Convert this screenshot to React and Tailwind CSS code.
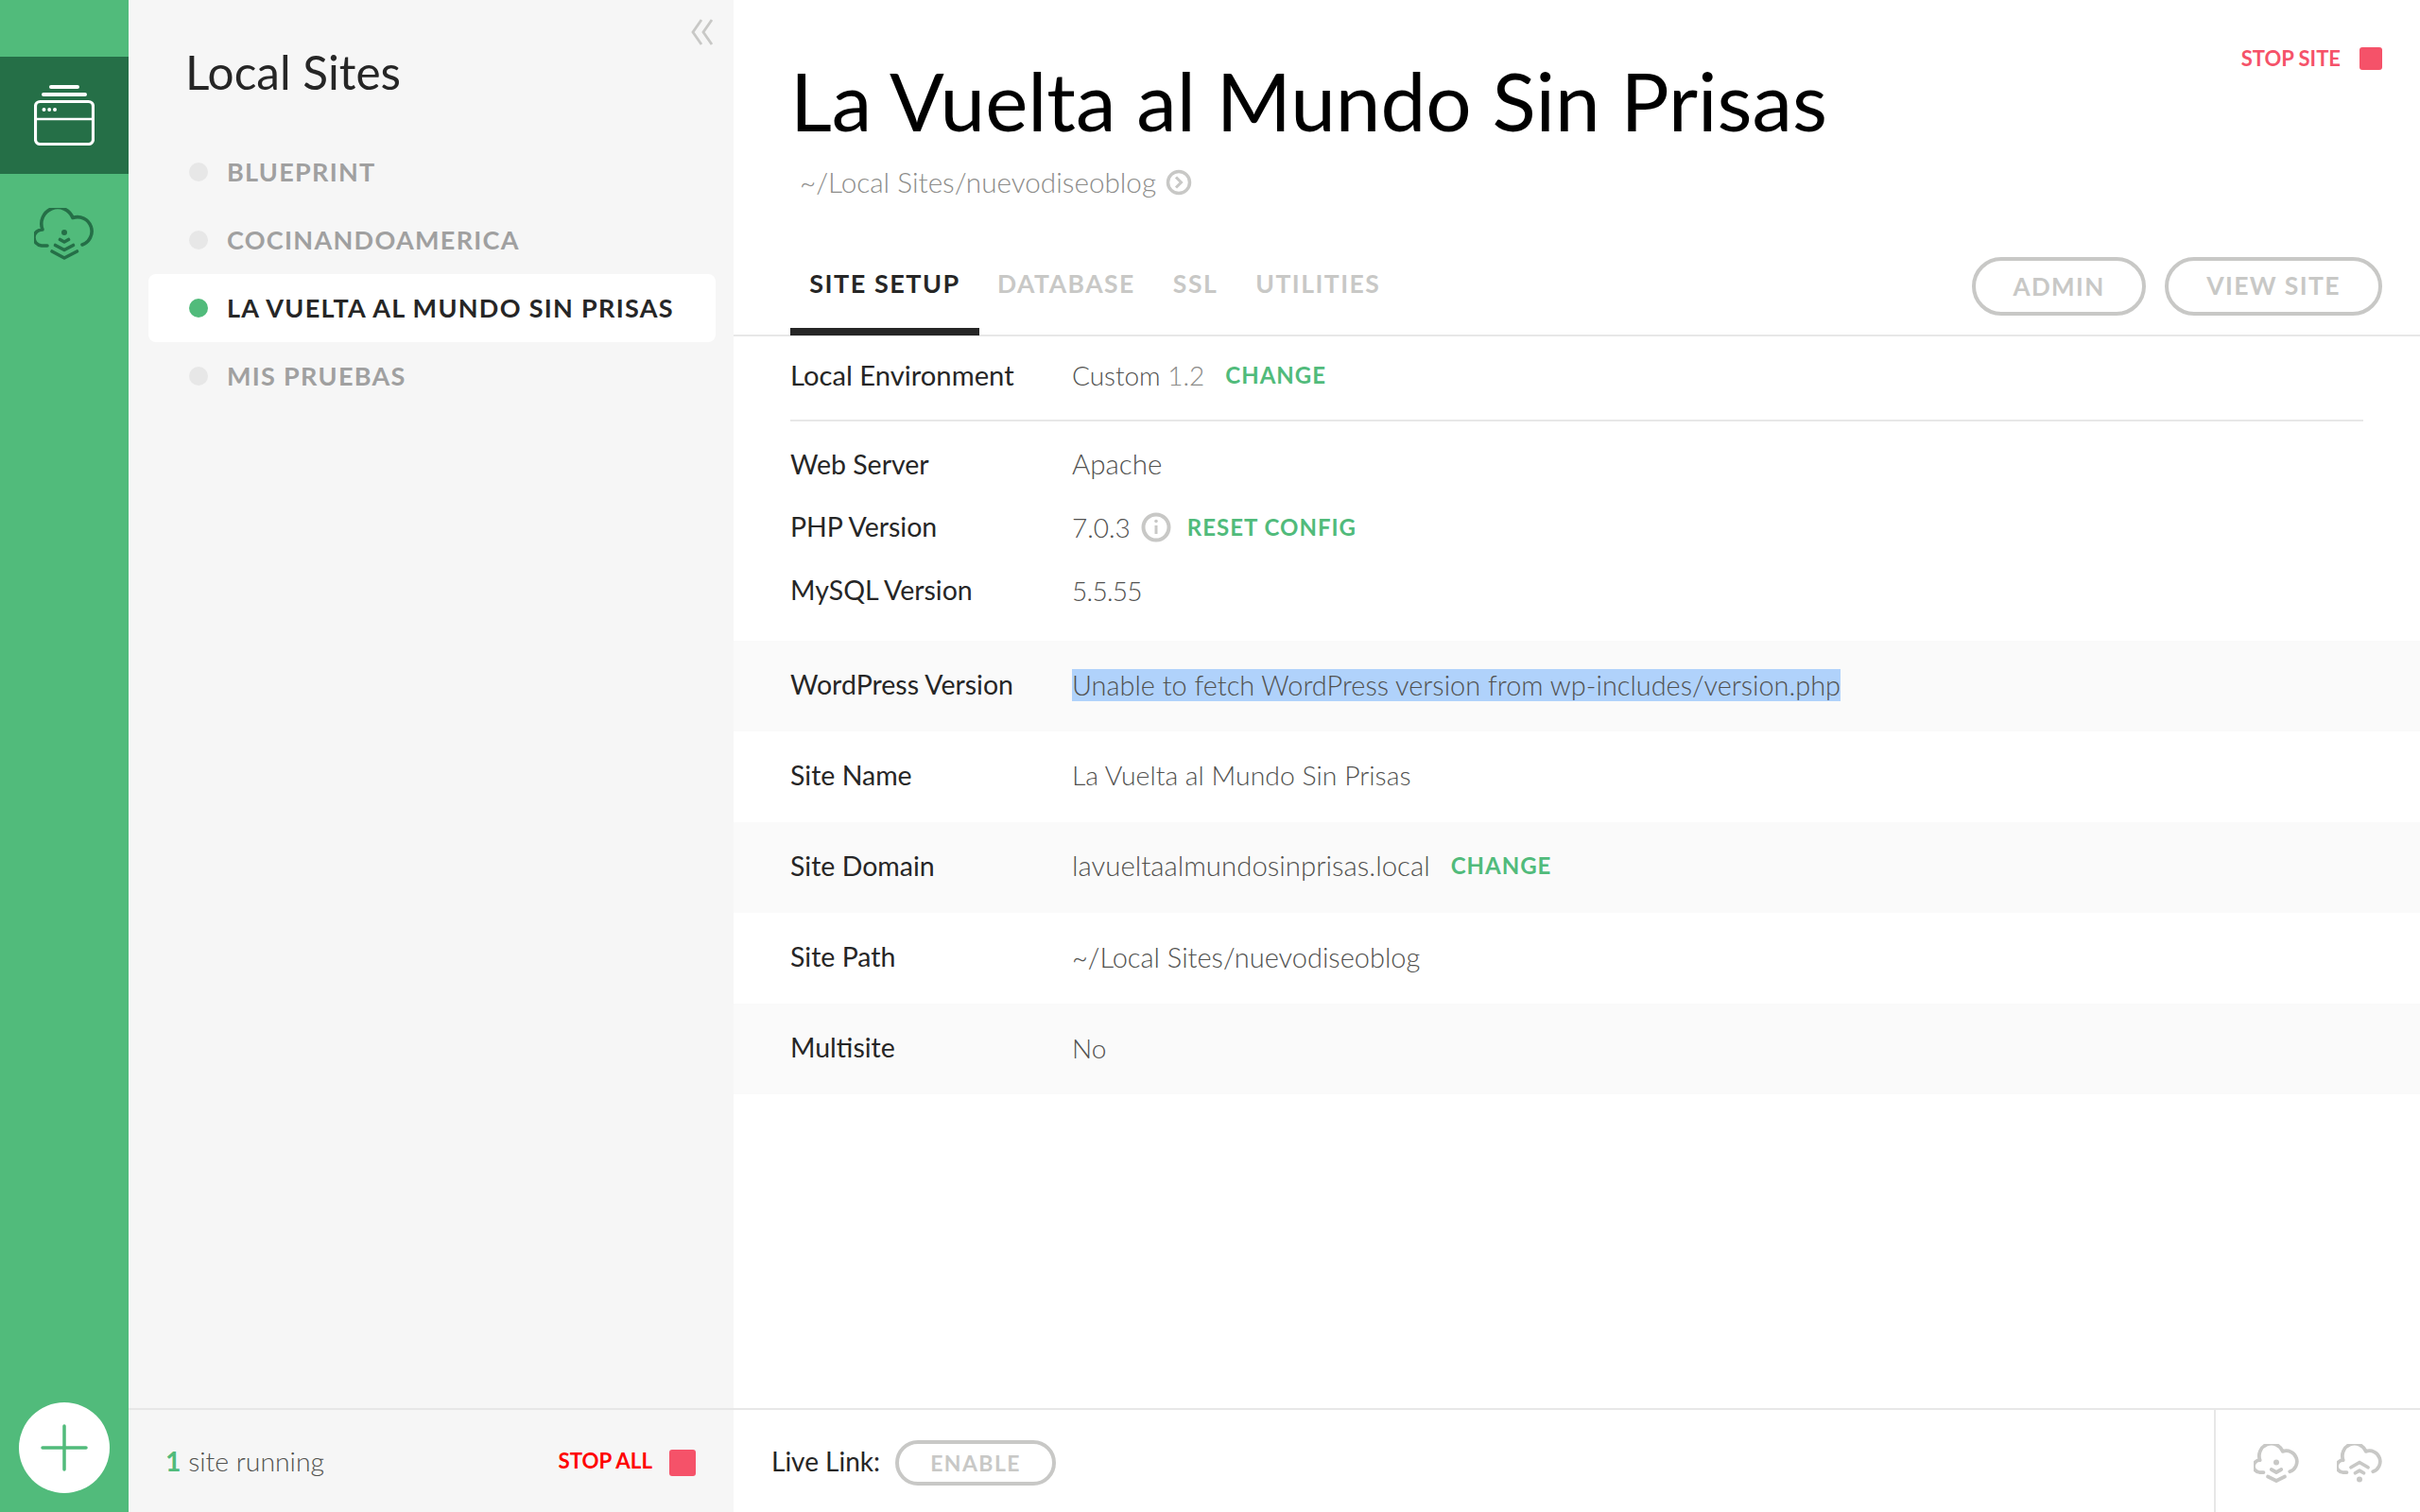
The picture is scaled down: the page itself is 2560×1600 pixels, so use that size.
import React from "react";

const sites = [
  { name: "BLUEPRINT" },
  { name: "COCINANDOAMERICA" },
  { name: "LA VUELTA AL MUNDO SIN PRISAS", active: true },
  { name: "MIS PRUEBAS" },
];

function CloudBase() {
  return <path d="M14 40H8A8.5 8.5 0 0 1 9 23A17 17 0 0 1 41 10.5A15 15 0 0 1 51 39" />;
}

function CloudDown({ className, color, three, sw = 3.6 }) {
  return (
    <svg viewBox="0 0 64 56" className={className} fill="none" stroke={color} strokeWidth={sw} strokeLinecap="round" strokeLinejoin="round">
      <CloudBase />
      <circle cx="32" cy="26" r={three ? 3 : 4} fill={color} stroke="none" />
      {three && <path d="M27.5 33.5L32 36L36.5 33.5" />}
      <path d={three ? "M22.5 39.5L32 44.5L41.5 39.5" : "M25 36L32 40L39 36"} />
      <path d={three ? "M19 46L32 53L45.5 46" : "M20 46L32 52L44 46"} />
    </svg>
  );
}

function CloudWifi({ className, color }) {
  return (
    <svg viewBox="0 0 64 56" className={className} fill="none" stroke={color} strokeWidth="5" strokeLinecap="round" strokeLinejoin="round">
      <CloudBase />
      <path d="M20 33L32 26L44 33" />
      <path d="M26 41L32 37.5L38 41" />
      <circle cx="32" cy="50" r="4" fill={color} stroke="none" />
    </svg>
  );
}

function SitesIcon() {
  return (
    <svg viewBox="0 0 64 64" className="w-16 h-16" fill="none" stroke="#fff">
      <path d="M18 2H46" strokeWidth="4" strokeLinecap="round" />
      <path d="M10 10H54" strokeWidth="4" strokeLinecap="round" />
      <rect x="1.5" y="17.5" width="61" height="45" rx="5" strokeWidth="3.2" />
      <path d="M1.5 36H62.5" strokeWidth="2.6" />
      <circle cx="10.5" cy="26" r="2" fill="#fff" stroke="none" />
      <circle cx="16.2" cy="26" r="2" fill="#fff" stroke="none" />
      <circle cx="22" cy="26" r="2" fill="#fff" stroke="none" />
    </svg>
  );
}

function Row({ label, children, shaded, valueClass }) {
  return (
    <div className={`h-[96px] flex items-center pl-[60px] pb-[3px] ${shaded ? "bg-[#fafafa]" : "bg-white"}`}>
      <Label>{label}</Label>
      <div className={`flex items-center font-light text-[#51514f] ${valueClass}`}>{children}</div>
    </div>
  );
}

function Label({ children }) {
  return <div className="w-[298px] text-[28.5px] text-[#262626]">{children}</div>;
}

function GreenLink({ children, className }) {
  return <span className={`text-[24px] font-bold tracking-[1px] text-[#51bb7b] ${className}`}>{children}</span>;
}

function Pill({ children, className }) {
  return (
    <div className={`flex items-center justify-center rounded-full border-[4px] border-[#c8c8c6] font-bold text-[#c8c8c6] tracking-[1.4px] ${className}`}>
      {children}
    </div>
  );
}

export default function App() {
  return (
    <div className="h-[1600px] w-[2560px] flex overflow-hidden bg-white" style={{ fontFamily: "Lato, sans-serif" }}>
      {/* Rail */}
      <div className="w-[136px] shrink-0 bg-[#51bb7b] flex flex-col">
        <div className="mt-[60px] h-[124px] bg-[#256f47] flex items-center justify-center">
          <SitesIcon />
        </div>
        <div className="mt-[36px] flex justify-center">
          <CloudDown className="w-16 h-14" color="#256f47" three />
        </div>
        <div className="mt-auto mb-[20px] flex justify-center">
          <div className="w-[96px] h-[96px] rounded-full bg-white flex items-center justify-center">
            <svg viewBox="0 0 50 50" className="w-[50px] h-[50px]" stroke="#51bb7b" strokeWidth="3.5" strokeLinecap="round">
              <path d="M25 2V48M2 25H48" />
            </svg>
          </div>
        </div>
      </div>

      {/* Sites pane */}
      <div className="w-[640px] shrink-0 bg-[#f6f6f6] flex flex-col">
        <div className="flex-1 relative">
          <svg viewBox="0 0 24 28" className="absolute left-[595px] top-[20px] w-[24px] h-[28px]" fill="none" stroke="#c8c8c6" strokeWidth="2.8">
            <path d="M11 1L2 14L11 27M22 1L13 14L22 27" />
          </svg>
          <h1 className="pt-[44px] pl-[60px] text-[49.5px] leading-[64px] font-normal text-[#262626]">Local Sites</h1>
          <div className="mt-[38px] pl-[21px] pr-[19px]">
            {sites.map((s) => (
              <div key={s.name} className={`h-[72px] flex items-center pl-[43px] rounded-[8px] ${s.active ? "bg-white" : ""}`}>
                <span className={`w-[20px] h-[20px] rounded-full ${s.active ? "bg-[#51bb7b]" : "bg-[#e7e7e7]"}`} />
                <span className={`ml-[20px] text-[27px] font-bold tracking-[1.3px] ${s.active ? "text-[#262626]" : "text-[#a0a0a0]"}`}>{s.name}</span>
              </div>
            ))}
          </div>
        </div>
        <div className="h-[110px] border-t-[2px] border-[#e7e7e7] flex items-center pl-[39px] pr-[40px]">
          <span className="text-[28.4px] font-light text-[#51514f]"><span className="font-bold text-[#51bb7b]">1</span> site running</span>
          <span className="ml-auto text-[22.3px] font-bold text-[#ff0000]">STOP ALL</span>
          <span className="ml-[18px] mt-[4px] w-[28px] h-[28px] rounded-[3px] bg-[#f55269]" />
        </div>
      </div>

      {/* Main */}
      <div className="flex-1 flex flex-col min-w-0">
        <div className="flex-1 relative">
          <div className="absolute right-[40px] top-[45px] flex items-center">
            <span className="text-[22px] font-bold text-[#f55269]">STOP SITE</span>
            <span className="ml-[20px] w-[24px] h-[24px] rounded-[3px] bg-[#f55269]" />
          </div>
          <h2 className="pt-[54px] pl-[60px] text-[85.4px] leading-[104px] font-normal text-black">La Vuelta al Mundo Sin Prisas</h2>
          <div className="mt-[14px] pl-[70px] flex items-center text-[29.7px] leading-[42px] font-light text-[#8c8c8a]">
            ~/Local Sites/nuevodiseoblog
            <svg viewBox="0 0 28 28" className="ml-[10px] w-[28px] h-[28px]" fill="none" stroke="#c8c8c6" strokeWidth="3.5">
              <circle cx="14" cy="14" r="11.5" />
              <path d="M11 8.5L16.5 14L11 19.5" strokeWidth="3" />
            </svg>
          </div>

          {/* Tabs */}
          <div className="mt-[33px] h-[109px] border-b-[2px] border-[#e7e7e7] pl-[60px] pr-[40px] flex items-stretch">
            <div className="h-[108px] w-[200px] pt-[7px] flex items-center justify-center border-b-[8px] border-[#262626] text-[27px] font-bold tracking-[1.5px] text-[#262626]">SITE SETUP</div>
            <div className="ml-[19px] flex items-center gap-[40px] text-[26.5px] font-bold tracking-[1.5px] text-[#c8c8c6]">
              <span>DATABASE</span>
              <span>SSL</span>
              <span>UTILITIES</span>
            </div>
            <div className="ml-auto flex items-center gap-[20px] pt-[5px]">
              <Pill className="w-[184px] h-[62px] text-[26px]">ADMIN</Pill>
              <Pill className="w-[230px] h-[62px] text-[26.5px]">VIEW SITE</Pill>
            </div>
          </div>

          {/* Environment */}
          <div className="px-[60px]">
            <div className="h-[90px] flex items-center border-b-[2px] border-[#e7e7e7] pb-[6px]">
              <div className="w-[298px] text-[29.2px] text-[#262626]">Local Environment</div>
              <span className="text-[28px] font-light text-[#51514f]">Custom <span className="text-[#8c8c8a]">1.2</span></span>
              <GreenLink className="ml-[22px]">CHANGE</GreenLink>
            </div>
            <div className="pt-[12px] pb-[20px]">
              <div className="h-[66px] flex items-center">
                <Label>Web Server</Label>
                <span className="text-[29.5px] font-light text-[#51514f]">Apache</span>
              </div>
              <div className="h-[67px] flex items-center">
                <Label>PHP Version</Label>
                <span className="text-[28px] font-light text-[#51514f]">7.0.3</span>
                <svg viewBox="0 0 32 32" className="ml-[11px] w-[32px] h-[32px]" fill="none" stroke="#c8c8c6" strokeWidth="4">
                  <circle cx="16" cy="16" r="13.5" />
                  <path d="M16 14V23" strokeWidth="3" />
                  <circle cx="16" cy="9.5" r="1.8" fill="#c8c8c6" stroke="none" />
                </svg>
                <GreenLink className="ml-[17px]">RESET CONFIG</GreenLink>
              </div>
              <div className="h-[67px] flex items-center">
                <Label>MySQL Version</Label>
                <span className="text-[28px] tracking-[-0.7px] font-light text-[#51514f]">5.5.55</span>
              </div>
            </div>
          </div>

          <Row label="WordPress Version" shaded valueClass="text-[28.9px]">
            <span className="bg-[#b0d2fb] leading-[34px]">Unable to fetch WordPress version from wp-includes/version.php</span>
          </Row>
          <Row label="Site Name" valueClass="text-[28.4px]">La Vuelta al Mundo Sin Prisas</Row>
          <Row label="Site Domain" shaded valueClass="text-[29.4px]">
            lavueltaalmundosinprisas.local
            <GreenLink className="ml-[22px]">CHANGE</GreenLink>
          </Row>
          <Row label="Site Path" valueClass="text-[29px]">~/Local Sites/nuevodiseoblog</Row>
          <Row label="Multisite" shaded valueClass="text-[28px]">No</Row>
        </div>

        {/* Footer */}
        <div className="h-[110px] border-t-[2px] border-[#e7e7e7] flex items-stretch">
          <div className="flex-1 flex items-center pl-[40px]">
            <span className="text-[28px] text-[#262626]">Live Link:</span>
            <Pill className="ml-[16px] mt-[4px] w-[170px] h-[48px] text-[23px]">ENABLE</Pill>
          </div>
          <div className="w-[218px] border-l-[2px] border-[#e7e7e7] flex items-center pl-[40px] pt-[6px] gap-[40px]">
            <CloudDown className="w-[48px] h-[42px]" color="#c8c8c6" sw={5} />
            <CloudWifi className="w-[48px] h-[42px]" color="#c8c8c6" />
          </div>
        </div>
      </div>
    </div>
  );
}
